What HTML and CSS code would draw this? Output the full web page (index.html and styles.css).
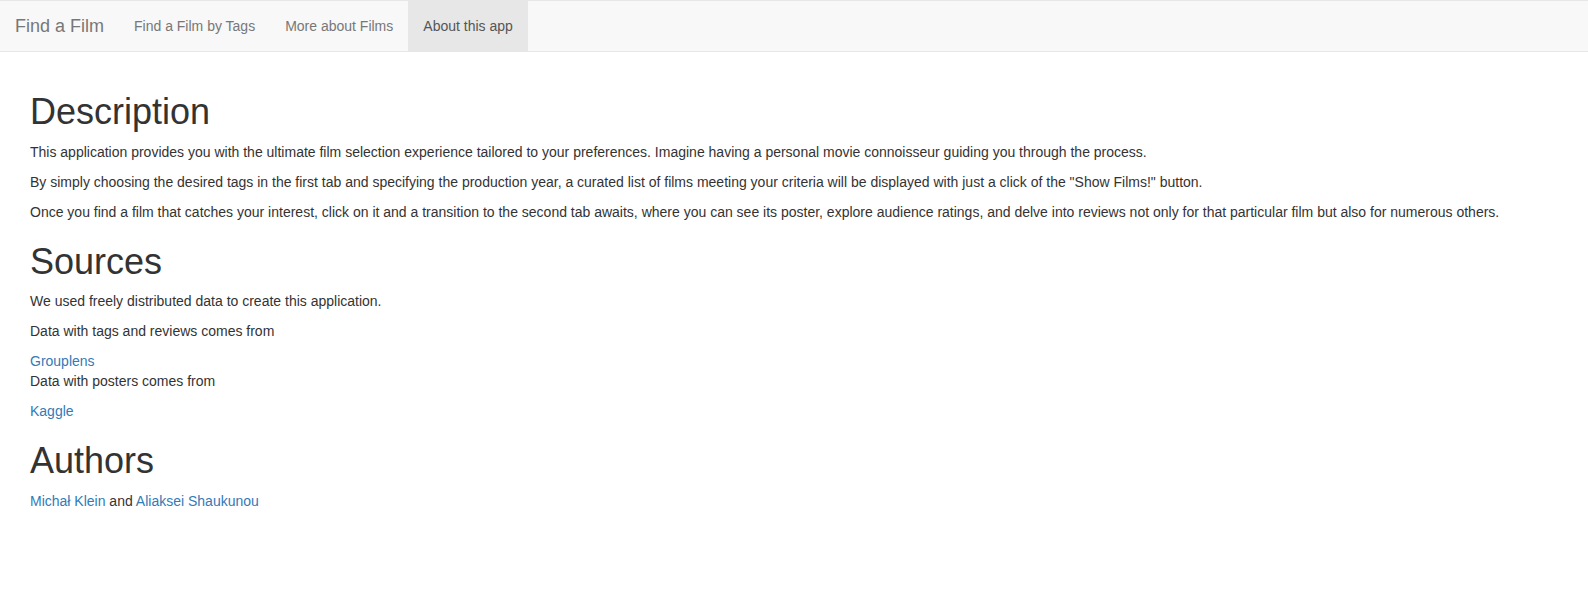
FILE: index.html
```html
<!DOCTYPE html>
<html lang="en">
<head>
<meta charset="utf-8">
<title>Find a Film</title>
<link rel="stylesheet" href="styles.css">
</head>
<body>
<nav class="navbar">
  <span class="brand">Find a Film</span>
  <ul class="nav">
    <li><a href="#">Find a Film by Tags</a></li>
    <li><a href="#">More about Films</a></li>
    <li class="active"><a href="#">About this app</a></li>
  </ul>
</nav>
<main class="content">
  <h1>Description</h1>
  <p>This application provides you with the ultimate film selection experience tailored to your preferences. Imagine having a personal movie connoisseur guiding you through the process.</p>
  <p>By simply choosing the desired tags in the first tab and specifying the production year, a curated list of films meeting your criteria will be displayed with just a click of the "Show Films!" button.</p>
  <p>Once you find a film that catches your interest, click on it and a transition to the second tab awaits, where you can see its poster, explore audience ratings, and delve into reviews not only for that particular film but also for numerous others.</p>
  <h1>Sources</h1>
  <p>We used freely distributed data to create this application.</p>
  <p>Data with tags and reviews comes from</p>
  <a class="link" href="#">Grouplens</a>
  <p>Data with posters comes from</p>
  <a class="link" href="#">Kaggle</a>
  <h1>Authors</h1>
  <p><a class="link" href="#">Michał Klein</a> and <a class="link" href="#">Aliaksei Shaukunou</a></p>
</main>
</body>
</html>
```
FILE: styles.css
```css
* { box-sizing: border-box; }
html, body { margin: 0; padding: 0; }
body {
  font-family: "Liberation Sans", Arial, Helvetica, sans-serif;
  font-size: 14px;
  line-height: 1.42857143;
  color: #333;
  background: #fff;
}
.navbar {
  display: flex;
  align-items: stretch;
  height: 52px;
  background: #f8f8f8;
  border-top: 1px solid #e7e7e7;
  border-bottom: 1px solid #e7e7e7;
  margin-bottom: 20px;
}
.brand {
  padding: 15px;
  font-size: 18px;
  line-height: 20px;
  height: 50px;
  color: #777;
}
.nav {
  display: flex;
  list-style: none;
  margin: 0;
  padding: 0;
}
.nav a {
  display: block;
  padding: 15px;
  line-height: 20px;
  height: 50px;
  color: #777;
  text-decoration: none;
}
.nav .active a {
  background: #e7e7e7;
  color: #555;
}
.content {
  display: flow-root;
  padding: 0 30px;
}
h1 {
  font-family: inherit;
  font-weight: 500;
  font-size: 36px;
  line-height: 1.1;
  color: inherit;
  margin: 20px 0 10px;
}
p { margin: 0 0 10px; }
.link {
  color: #337ab7;
  text-decoration: none;
}
```
